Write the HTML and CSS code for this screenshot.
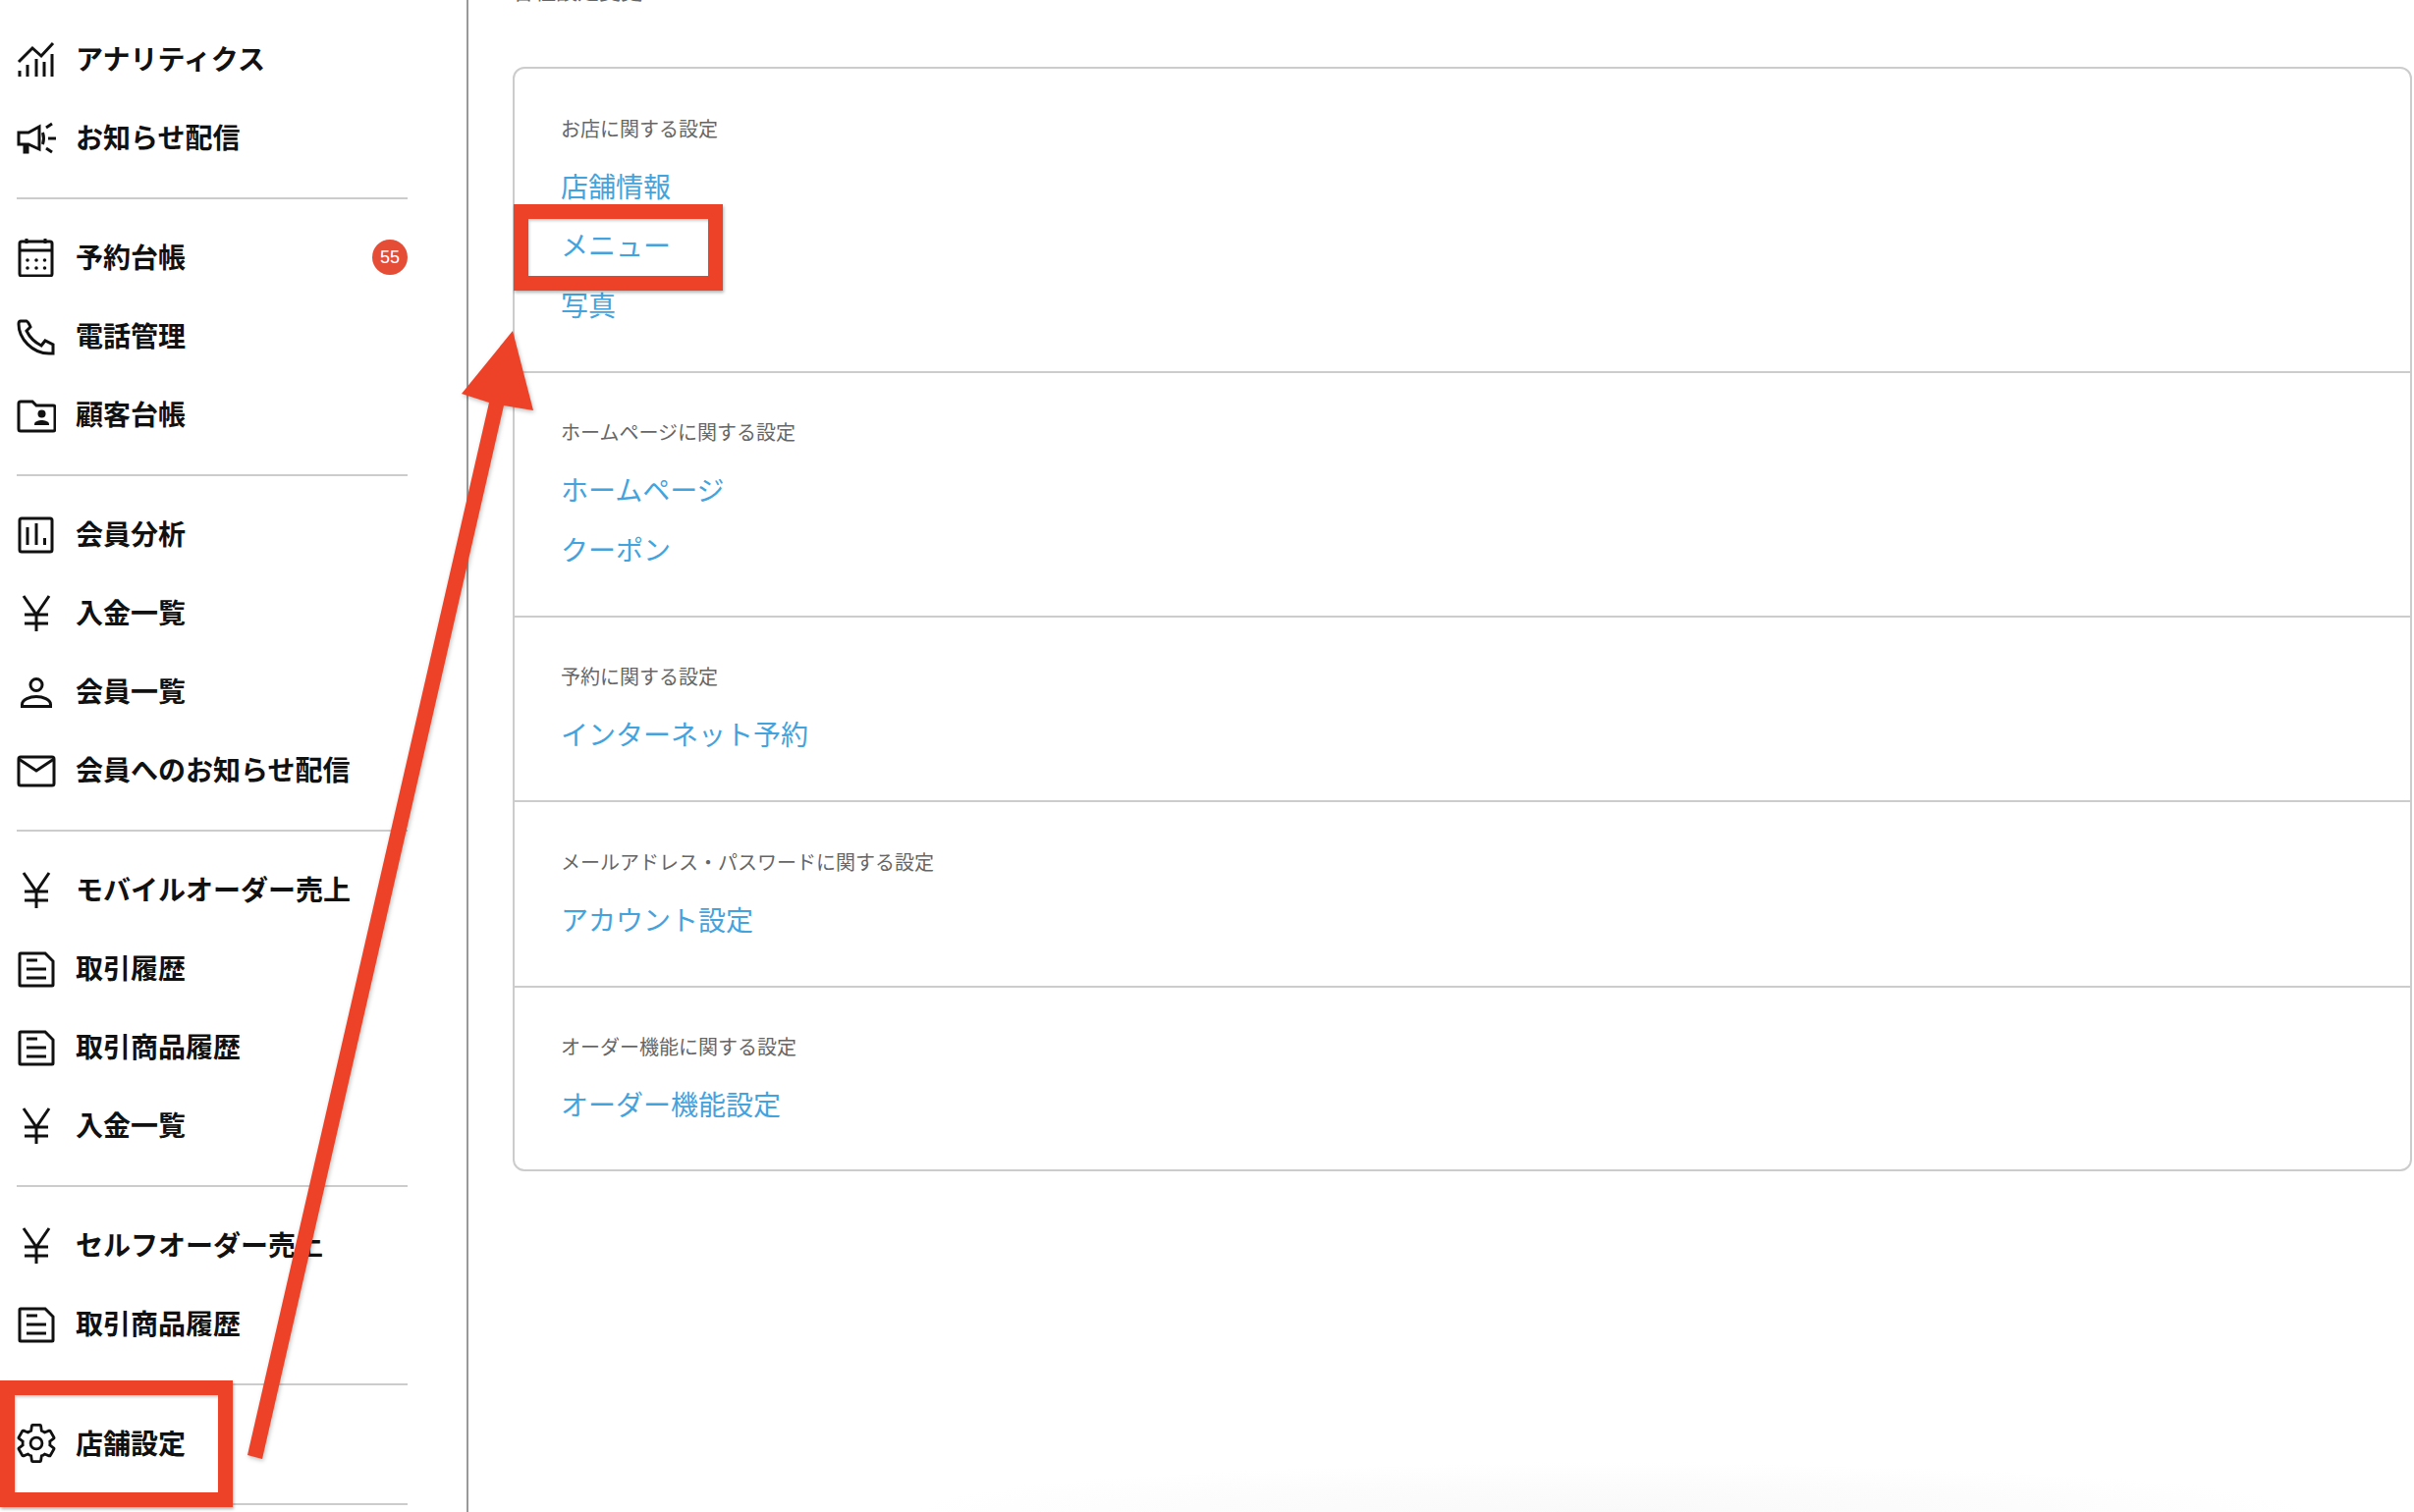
FILE: index.html
```html
<!DOCTYPE html>
<html lang="ja">
<head>
<meta charset="utf-8">
<title>店舗設定</title>
<link rel="stylesheet" href="styles.css">
</head>
<body>
<div class="page">
  <nav class="sidebar">
    <ul class="group">
      <li class="item"><svg class="icon" viewBox="0 0 40 40"><path d="M2 23 16 9l9 8L37 4"/><path d="M3 32v6M11 26v12M20 20v18M28 23v15M36 15v23"/></svg><span>アナリティクス</span></li>
      <li class="item"><svg class="icon" viewBox="0 0 40 40"><path d="M2 15h10l11-6v23l-11-5H2z"/><path d="M8 27v8h3v-8M26.500 15q2 6 0 12M30 10l6-4M32 21h8M30 31l6 4"/></svg><span>お知らせ配信</span></li>
    </ul>
    <ul class="group">
      <li class="item"><svg class="icon" viewBox="0 0 40 40"><rect x="3" y="4" width="33" height="35" rx="2"/><path d="M3 13h33M10 1v5M29 1v5"/><path class="dots" d="M11 23h.01M20 23h.01M28.500 23h.01M11 31h.01M20 31h.01M28.500 31h.01"/></svg><span>予約台帳</span><b class="badge">55</b></li>
      <li class="item"><svg class="icon" viewBox="0 0 40 40"><path d="M4 5h6q2 1 4 6l-4 4q5 10 15 15l4-5 8 4v9h-4C16 38 2 23 2 8q0-3 2-3z"/></svg><span>電話管理</span></li>
      <li class="item"><svg class="icon" viewBox="0 0 40 40"><path d="M2 9q0-2 2-2h12l4 4h17q2 0 2 2v22q0 2-2 2H4q-2 0-2-2z"/><circle class="solid" cx="25.500" cy="19.500" r="4"/><path class="solid" d="M18 31v-1c0-3 5-4 7.500-4s7.500 1 7.500 4v1z"/></svg><span>顧客台帳</span></li>
    </ul>
    <ul class="group">
      <li class="item"><svg class="icon" viewBox="0 0 40 40"><rect x="3" y="4" width="33" height="34" rx="2"/><path d="M11 13v18M20 9v22M28.500 24v7"/></svg><span>会員分析</span></li>
      <li class="item"><svg class="icon" viewBox="0 0 40 40"><path d="m7 3 13 19L33 3M20 22v17M8 22h24M8 31h24"/></svg><span>入金一覧</span></li>
      <li class="item"><svg class="icon" viewBox="0 0 40 40"><circle cx="20" cy="13.500" r="6"/><path d="M5.500 35.500v-2c0-5 8-8 14.500-8s14.500 3 14.500 8v2z"/></svg><span>会員一覧</span></li>
      <li class="item"><svg class="icon" viewBox="0 0 40 40"><rect x="2" y="7" width="36" height="29" rx="2"/><path d="m2 9 18 12L38 9"/></svg><span>会員へのお知らせ配信</span></li>
    </ul>
    <ul class="group">
      <li class="item"><svg class="icon" viewBox="0 0 40 40"><path d="m7 3 13 19L33 3M20 22v17M8 22h24M8 31h24"/></svg><span>モバイルオーダー売上</span></li>
      <li class="item"><svg class="icon" viewBox="0 0 40 40"><path d="M4 5h25l8 8v24q0 1-1 1H4q-1 0-1-1V6q0-1 1-1z"/><path d="M10 12h11M10 21h20M10 30h20"/></svg><span>取引履歴</span></li>
      <li class="item"><svg class="icon" viewBox="0 0 40 40"><path d="M4 5h25l8 8v24q0 1-1 1H4q-1 0-1-1V6q0-1 1-1z"/><path d="M10 12h11M10 21h20M10 30h20"/></svg><span>取引商品履歴</span></li>
      <li class="item"><svg class="icon" viewBox="0 0 40 40"><path d="m7 3 13 19L33 3M20 22v17M8 22h24M8 31h24"/></svg><span>入金一覧</span></li>
    </ul>
    <ul class="group">
      <li class="item"><svg class="icon" viewBox="0 0 40 40"><path d="m7 3 13 19L33 3M20 22v17M8 22h24M8 31h24"/></svg><span>セルフオーダー売上</span></li>
      <li class="item"><svg class="icon" viewBox="0 0 40 40"><path d="M4 5h25l8 8v24q0 1-1 1H4q-1 0-1-1V6q0-1 1-1z"/><path d="M10 12h11M10 21h20M10 30h20"/></svg><span>取引商品履歴</span></li>
    </ul>
    <ul class="group">
      <li class="item"><svg class="icon icon-gear" viewBox="1.200 1.200 21.600 21.600"><path d="M19.430 12.980c.04-.32.07-.64.07-.98 0-.34-.03-.66-.07-.98l2.110-1.650c.19-.15.24-.42.12-.64l-2-3.460c-.09-.16-.26-.25-.44-.25-.06 0-.12.01-.17.03l-2.490 1c-.52-.4-1.080-.73-1.690-.98l-.38-2.650C14.460 2.180 14.250 2 14 2h-4c-.25 0-.46.18-.49.42l-.38 2.650c-.61.25-1.170.59-1.690.98l-2.490-1c-.06-.02-.12-.03-.18-.03-.17 0-.34.09-.43.25l-2 3.460c-.13.22-.07.49.12.64l2.110 1.650c-.04.32-.07.65-.07.98 0 .33.03.66.07.98l-2.110 1.650c-.19.15-.24.42-.12.64l2 3.460c.09.16.26.25.44.25.06 0 .12-.01.17-.03l2.490-1c.52.4 1.080.73 1.690.98l.38 2.650c.03.24.24.42.49.42h4c.25 0 .46-.18.49-.42l.38-2.650c.61-.25 1.170-.59 1.690-.98l2.490 1c.06.02.12.03.18.03.17 0 .34-.09.43-.25l2-3.460c.12-.22.07-.49-.12-.64l-2.110-1.650z"/><circle cx="12" cy="12" r="3.200"/></svg><span>店舗設定</span></li>
    </ul>
  </nav>
  <main class="content">
    <h1 class="page-title">各種設定変更</h1>
    <section class="card">
      <div class="block">
        <h2>お店に関する設定</h2>
        <a href="#">店舗情報</a>
        <a href="#">メニュー</a>
        <a href="#">写真</a>
      </div>
      <div class="block">
        <h2>ホームページに関する設定</h2>
        <a href="#">ホームページ</a>
        <a href="#">クーポン</a>
      </div>
      <div class="block">
        <h2>予約に関する設定</h2>
        <a href="#">インターネット予約</a>
      </div>
      <div class="block">
        <h2>メールアドレス・パスワードに関する設定</h2>
        <a href="#">アカウント設定</a>
      </div>
      <div class="block">
        <h2>オーダー機能に関する設定</h2>
        <a href="#">オーダー機能設定</a>
      </div>
    </section>
  </main>
</div>
<div class="bottom-fade"></div>
<div class="mark mark-menu"></div>
<div class="mark mark-settings"></div>
<svg class="arrow" viewBox="0 0 2458 1540"><polygon points="252,1482 267,1486 513,413 543,418 522,337 470,401 498,410"/></svg>
</body>
</html>
```
FILE: styles.css
```css
* {
  box-sizing: border-box;
}

html,
body {
  margin: 0;
  height: 100%;
  background: #fff;
  overflow: hidden;
}

body {
  position: relative;
  font-family: "Noto Sans CJK JP", "Noto Sans", sans-serif;
}

.page {
  display: flex;
  height: 1540px;
}

.sidebar {
  flex: 0 0 477px;
  padding: 20px 60px 0 17px;
  border-right: 2px solid #999;
}

.group {
  list-style: none;
  margin: 0 0 19px;
  padding: 0 0 21px;
  border-bottom: 2px solid #ccc;
}

.item {
  display: flex;
  align-items: center;
  gap: 20px;
  height: 80px;
  color: #111;
  font-size: 28px;
  font-weight: 700;
  line-height: 1;
}

.item span {
  margin-top: -2px;
}

.icon {
  flex: 0 0 40px;
  width: 40px;
  height: 40px;
  fill: none;
  stroke: #111;
  stroke-width: 3;
}

.icon-gear {
  stroke-width: 1.500;
}

.icon .solid {
  fill: #111;
  stroke: none;
}

.icon .dots {
  stroke-width: 3.600;
  stroke-linecap: round;
}

.badge {
  width: 36px;
  height: 36px;
  margin-left: auto;
  border-radius: 50%;
  background: #e64d36;
  color: #fff;
  font-family: "Liberation Sans", sans-serif;
  font-size: 18px;
  font-weight: 400;
  line-height: 36px;
  text-align: center;
}

.content {
  flex: 1;
  min-width: 0;
  padding: 0 2px 0 45px;
}

.page-title {
  margin: -25px 0 65px;
  color: #666;
  font-size: 22px;
  font-weight: 400;
  line-height: 28px;
}

.card {
  border: 2px solid #ccc;
  border-radius: 12px;
}

.block {
  padding: 48.500px 0 37.500px 47px;
  border-bottom: 2px solid #ccc;
}

.block:last-child {
  border-bottom: 0;
  padding-bottom: 36.500px;
}

.block h2 {
  margin: 0 0 16px;
  color: #666;
  font-size: 20px;
  font-weight: 400;
  line-height: 24px;
}

.block a {
  display: block;
  height: 60.500px;
  color: #44a3dd;
  font-size: 28px;
  line-height: 60px;
  text-decoration: none;
}

.bottom-fade {
  position: absolute;
  left: 930px;
  top: 1490px;
  width: 1420px;
  height: 50px;
  background: radial-gradient(ellipse 50% 100% at 50% 100%, #f9f9f9, #fcfcfc 60%, rgba(255, 255, 255, 0) 100%);
}

.mark {
  position: absolute;
  border: 15px solid #ed4227;
  box-shadow: 1px 2px 3px rgba(0, 0, 0, 0.3), inset 1px 2px 3px rgba(0, 0, 0, 0.2);
}

.mark-menu {
  left: 523px;
  top: 208px;
  width: 213px;
  height: 88px;
}

.mark-settings {
  left: 0;
  top: 1406px;
  width: 237px;
  height: 129px;
}

.arrow {
  position: absolute;
  left: 0;
  top: 0;
  width: 2458px;
  height: 1540px;
  fill: #ed4227;
  filter: drop-shadow(1px 2px 2px rgba(0, 0, 0, 0.25));
}
```
